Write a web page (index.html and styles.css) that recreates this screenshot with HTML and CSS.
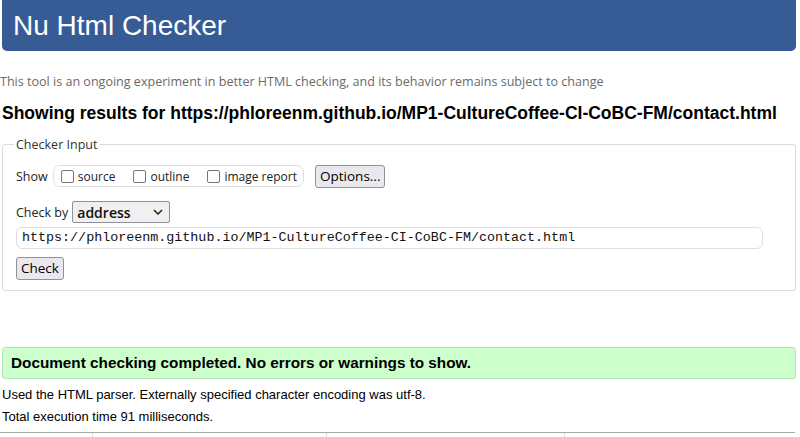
FILE: index.html
```html
<!DOCTYPE html>
<html>
<head>
<meta charset="utf-8">
<link rel="stylesheet" href="styles.css">
</head>
<body>
<h1 class="banner">Nu Html Checker</h1>
<p class="tagline">This tool is an ongoing experiment in better HTML checking, and its behavior remains subject to change</p>
<h2 class="results-for">Showing results for https://phloreenm.github.io/MP1-CultureCoffee-CI-CoBC-FM/contact.html</h2>
<fieldset class="input-box">
  <legend>Checker Input</legend>
  <div class="row show-row">
    <span class="label">Show</span>
    <span class="show-group">
      <span class="opt"><span class="cb"></span>source</span>
      <span class="opt"><span class="cb"></span>outline</span>
      <span class="opt"><span class="cb"></span>image report</span>
    </span>
    <span class="btn options">Options...</span>
  </div>
  <div class="row by-row">
    <span class="label">Check by</span>
    <span class="select">address<svg class="chev" width="10" height="6" viewBox="0 0 10 6"><path d="M1 1l4 4 4-4" fill="none" stroke="#222" stroke-width="1.5"/></svg></span>
  </div>
  <div class="url">https://phloreenm.github.io/MP1-CultureCoffee-CI-CoBC-FM/contact.html</div>
  <span class="btn check">Check</span>
</fieldset>
<p class="success">Document checking completed. No errors or warnings to show.</p>
<p class="meta first">Used the HTML parser. Externally specified character encoding was utf-8.</p>
<p class="meta">Total execution time 91 milliseconds.</p>
<div class="table-top"><span></span><span></span><span></span></div>
</body>
</html>
```
FILE: styles.css
```css
html, body { margin: 0; padding: 0; background: #fff; }
body { font-family: "Liberation Sans", Arial, sans-serif; color: #000; overflow: hidden; }

.banner {
  margin: 0 4px 0 2px;
  height: 51px;
  box-sizing: border-box;
  background: #375c95;
  color: #fff;
  font-weight: normal;
  font-size: 28px;
  line-height: 51px;
  padding-left: 11px;
  border-radius: 0 0 5px 5px;
}
.tagline {
  margin: 22px 0 0 0;
  font-family: "Open Sans", sans-serif;
  font-size: 12.55px;
  color: #6a6a6a;
  line-height: 18px;
}
.results-for {
  margin: 11px 0 0 2px;
  font-size: 17.5px;
  font-weight: bold;
  line-height: 22px;
}
.input-box {
  margin: 12px 4px 0 2px;
  border: 1px solid #dcdcdc;
  border-radius: 3px;
  padding: 11px 13px 10px 13px;
  font-family: "Open Sans", sans-serif;
  font-size: 12.5px;
  color: #222;
}
.input-box legend {
  padding: 0 2px;
  margin-left: -2px;
  color: #333;
}
.row { display: flex; align-items: center; }
.show-row { height: 24px; }
.label { margin-right: 5px; }
.show-group {
  display: flex;
  align-items: center;
  gap: 18px;
  height: 20px;
  border: 1px solid #dedede;
  border-radius: 7px;
  padding: 0 6px 0 7px;
  font-size: 12px;
}
.opt { display: flex; align-items: center; gap: 4px; }
.cb {
  width: 11px; height: 11px;
  border: 1px solid #777;
  border-radius: 2px;
  background: #fff;
}
.btn {
  display: inline-block;
  box-sizing: border-box;
  background: #e9e9ed;
  border: 1px solid #8f8f9d;
  border-radius: 3px;
  color: #000;
  font-size: 13.5px;
  font-family: "Open Sans", sans-serif;
}
.options { margin-left: 11px; height: 23px; line-height: 20px; padding: 0 4px; }
.by-row { margin-top: 13px; height: 22px; }
.select {
  display: flex;
  align-items: center;
  justify-content: space-between;
  box-sizing: border-box;
  width: 98px; height: 22px;
  border: 1px solid #8f8f9d;
  border-radius: 2px;
  background: #f0f0f0;
  padding: 0 6px 0 4px;
  font-family: "Open Sans", sans-serif;
  font-weight: 600;
  font-size: 14px;
  color: #111;
  margin-left: -1px;
}
.url {
  margin-top: 4px;
  box-sizing: border-box;
  height: 22px;
  border: 1px solid #dedede;
  border-radius: 6px;
  font-family: "Liberation Mono", monospace;
  font-size: 13.37px;
  line-height: 20px;
  padding-left: 5px;
  margin-right: 19px;
  color: #111;
}
.check { margin-top: 8px; height: 23px; line-height: 20px; padding: 0 4px; }
.success {
  margin: 56px 4px 0 2px;
  background: #ccffcc;
  border: 1px solid #b6e4b6;
  border-radius: 3px;
  font-weight: bold;
  font-size: 15.3px;
  line-height: 30px;
  padding-left: 8px;
}
.meta { margin: 0 0 0 2px; font-size: 13px; line-height: 22px; }
.meta.first { margin-top: 5px; }
.table-top {
  margin: 4px 5px 0 0;
  border-top: 1px solid #aaa;
  display: flex;
  height: 6px;
}
.table-top span { flex: 0 0 auto; border-left: 1px solid #ddd; }
.table-top span:nth-child(1) { margin-left: 92px; }
.table-top span:nth-child(2) { margin-left: 233px; }
.table-top span:nth-child(3) { margin-left: 237px; }
```
